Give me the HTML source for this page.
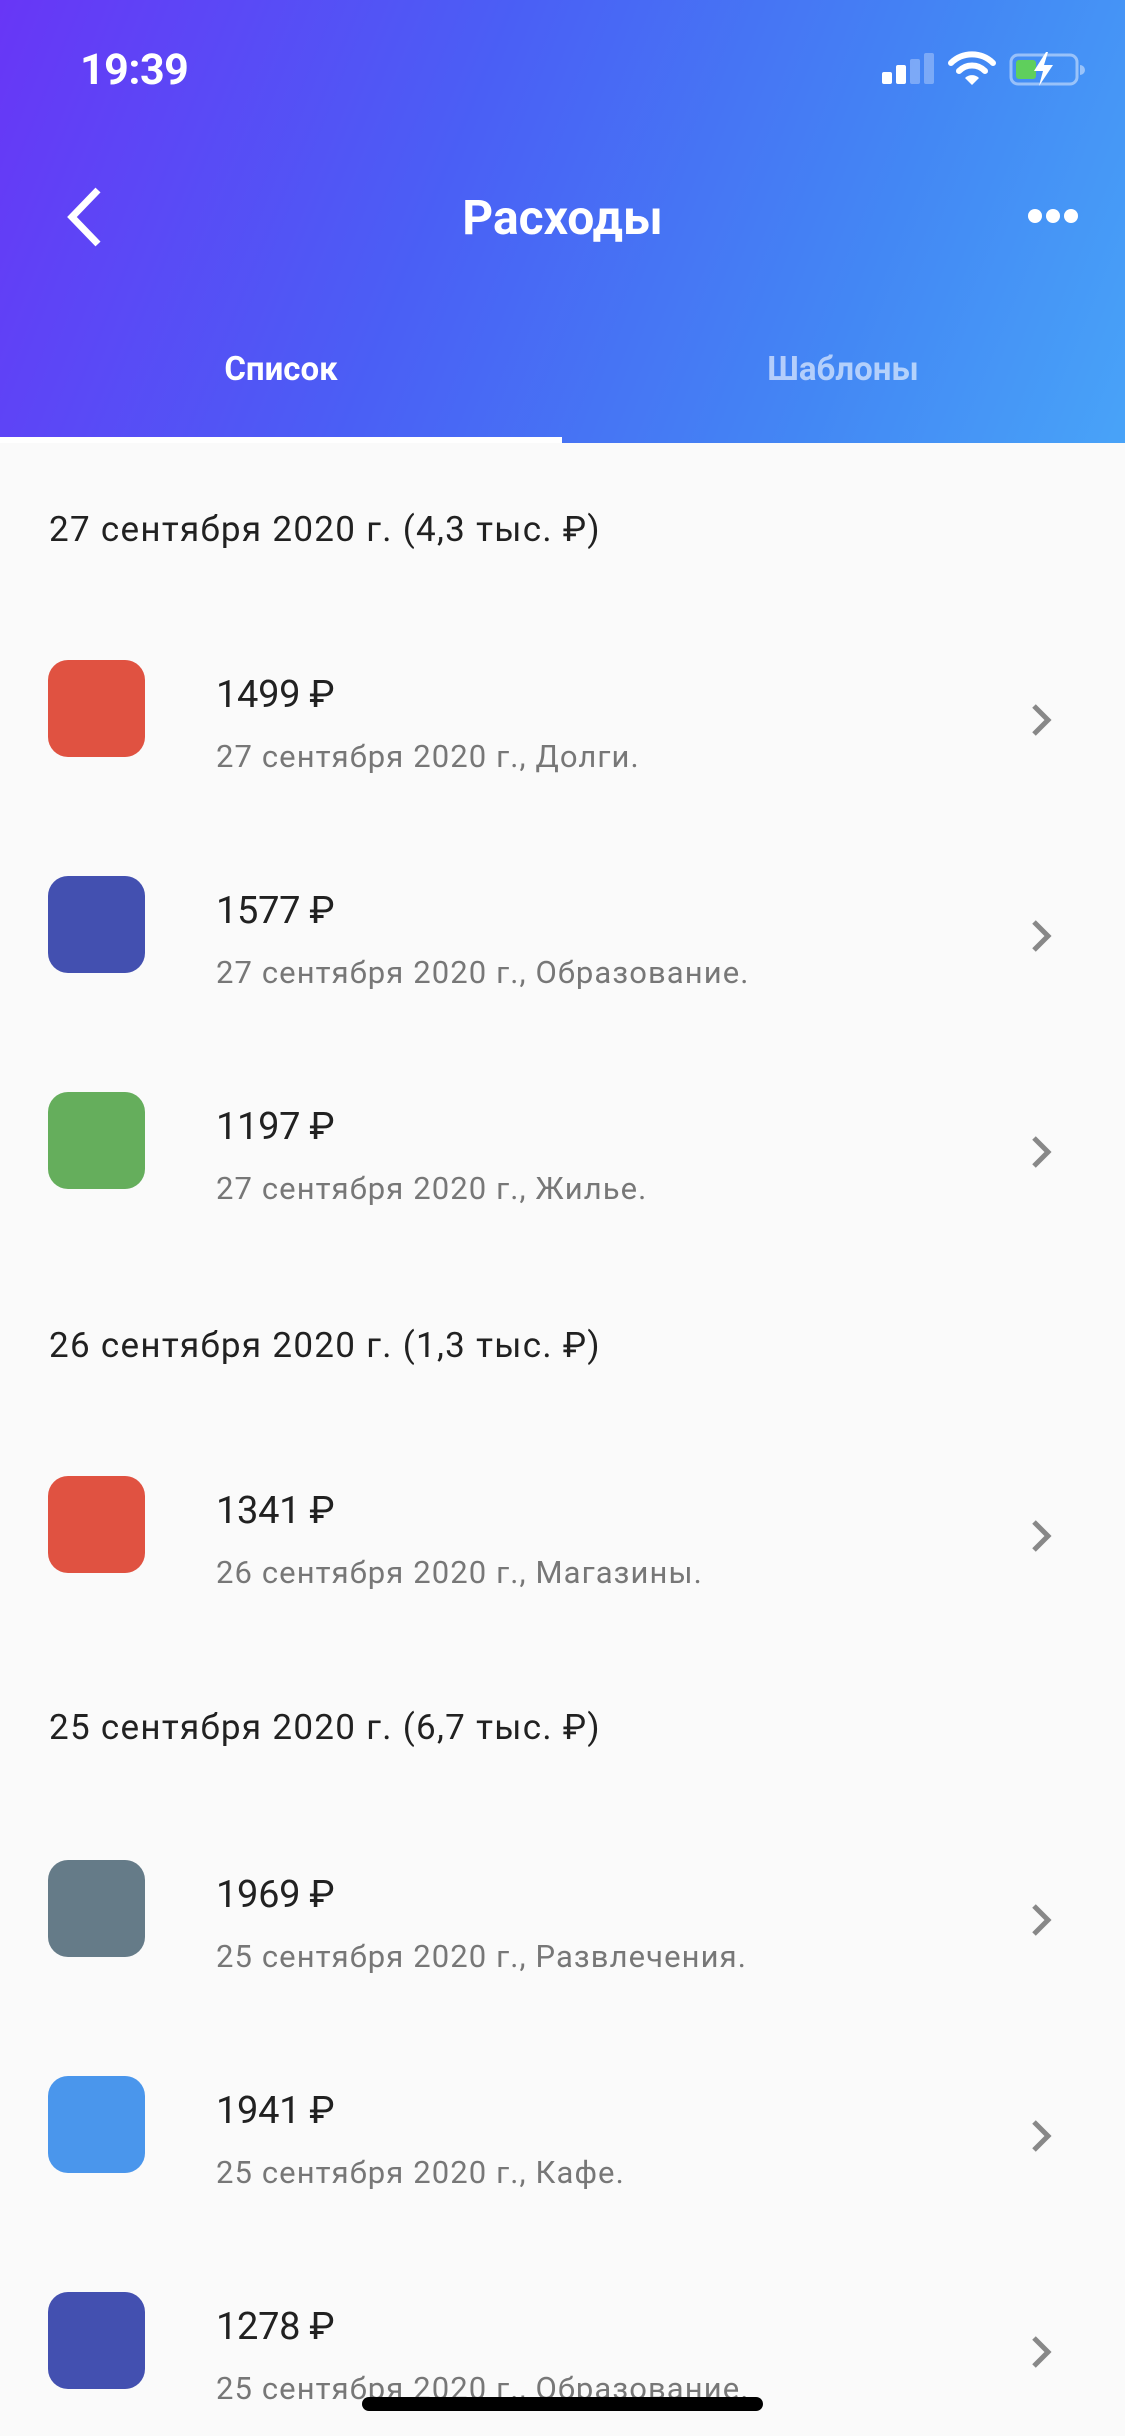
<!DOCTYPE html>
<html><head><meta charset="utf-8"><style>
*{margin:0;padding:0;box-sizing:border-box}
body{width:1125px;height:2436px;background:#fafafa;position:relative;overflow:hidden;font-family:"Roboto","Liberation Sans",sans-serif}
.hdr{position:absolute;left:0;top:0;width:1125px;height:443px;background:linear-gradient(112deg,#6836f6 0%,#4a5ff5 40%,#4387f4 75%,#48a3f8 100%)}
.t{position:absolute;white-space:nowrap}
.sq{position:absolute;left:48px;width:97px;height:97px;border-radius:20px}
.amt{left:216px;font-size:38px;color:#212121;line-height:44px;letter-spacing:-0.3px}
.sub{left:216px;font-size:31px;color:#777;line-height:38px;letter-spacing:1.1px}
.sec{left:49px;font-size:35px;color:#212121;line-height:44px;letter-spacing:1.3px}
.chev{position:absolute;left:1028px;width:28px;height:36px}
</style></head><body>
<div class="hdr"></div>
<div class="t" style="left:80px;top:44px;font-size:43px;font-weight:bold;color:#fff;line-height:52px;letter-spacing:-0.5px">19:39</div>
<svg style="position:absolute;left:880px;top:50px" width="205" height="38" viewBox="0 0 205 38">
<rect x="2" y="22" width="10" height="12" rx="2" fill="#fff"/>
<rect x="16" y="15" width="10" height="19" rx="2" fill="#fff"/>
<rect x="30" y="9" width="10" height="25" rx="2" fill="rgba(255,255,255,0.3)"/>
<rect x="44" y="3" width="10" height="31" rx="2" fill="rgba(255,255,255,0.3)"/>
<path d="M71 13a30 30 0 0 1 42 0" stroke="#fff" stroke-width="6" fill="none" stroke-linecap="round"/>
<path d="M79 21a18 18 0 0 1 26 0" stroke="#fff" stroke-width="6" fill="none" stroke-linecap="round"/>
<path d="M92 35l-7-7a10 10 0 0 1 14 0z" fill="#fff"/>
<rect x="131" y="5" width="66" height="29" rx="7" fill="none" stroke="rgba(255,255,255,0.45)" stroke-width="3"/>
<path d="M200 15v10a3 3 0 0 0 0-10z" fill="rgba(255,255,255,0.45)"/>
<rect x="136" y="10" width="20" height="19" rx="3" fill="#5fcf5c"/>
<path d="M166 2l-12 19h9l-4 15 14-21h-9l4-13z" fill="#fff"/>
</svg>
<svg style="position:absolute;left:62px;top:186px" width="44" height="62" viewBox="0 0 44 62"><path d="M36 4L10 31l26 27" stroke="#fff" stroke-width="7" fill="none"/></svg>
<div class="t" style="left:0;width:1125px;text-align:center;top:190px;font-size:48px;font-weight:bold;color:#fff;line-height:56px">Расходы</div>
<svg style="position:absolute;left:1026px;top:205px" width="54" height="22"><circle cx="9" cy="11" r="7" fill="#fff"/><circle cx="27" cy="11" r="7" fill="#fff"/><circle cx="45" cy="11" r="7" fill="#fff"/></svg>
<div class="t" style="left:0;width:562px;text-align:center;top:350px;font-size:33px;font-weight:bold;color:#fff;line-height:40px">Список</div>
<div class="t" style="left:562px;width:562px;text-align:center;top:350px;font-size:33px;font-weight:bold;color:rgba(255,255,255,0.6);line-height:40px">Шаблоны</div>
<div style="position:absolute;left:0;top:437px;width:562px;height:6px;background:#fff"></div>

<div class="t sec" style="top:508px">27 сентября 2020 г. (4,3 тыс. ₽)</div>

<div class="sq" style="top:660px;background:#e05241"></div>
<div class="t amt" style="top:673px">1499 ₽</div>
<div class="t sub" style="top:738px">27 сентября 2020 г., Долги.</div>
<svg class="chev" style="top:702px" viewBox="0 0 28 36"><path d="M6 4l14 14L6 32" stroke="#888" stroke-width="5" fill="none"/></svg>

<div class="sq" style="top:876px;background:#4350b0"></div>
<div class="t amt" style="top:889px">1577 ₽</div>
<div class="t sub" style="top:954px">27 сентября 2020 г., Образование.</div>
<svg class="chev" style="top:918px" viewBox="0 0 28 36"><path d="M6 4l14 14L6 32" stroke="#888" stroke-width="5" fill="none"/></svg>

<div class="sq" style="top:1092px;background:#65ae5c"></div>
<div class="t amt" style="top:1105px">1197 ₽</div>
<div class="t sub" style="top:1170px">27 сентября 2020 г., Жилье.</div>
<svg class="chev" style="top:1134px" viewBox="0 0 28 36"><path d="M6 4l14 14L6 32" stroke="#888" stroke-width="5" fill="none"/></svg>

<div class="t sec" style="top:1324px">26 сентября 2020 г. (1,3 тыс. ₽)</div>

<div class="sq" style="top:1476px;background:#e05241"></div>
<div class="t amt" style="top:1489px">1341 ₽</div>
<div class="t sub" style="top:1554px">26 сентября 2020 г., Магазины.</div>
<svg class="chev" style="top:1518px" viewBox="0 0 28 36"><path d="M6 4l14 14L6 32" stroke="#888" stroke-width="5" fill="none"/></svg>

<div class="t sec" style="top:1706px">25 сентября 2020 г. (6,7 тыс. ₽)</div>

<div class="sq" style="top:1860px;background:#657b88"></div>
<div class="t amt" style="top:1873px">1969 ₽</div>
<div class="t sub" style="top:1938px">25 сентября 2020 г., Развлечения.</div>
<svg class="chev" style="top:1902px" viewBox="0 0 28 36"><path d="M6 4l14 14L6 32" stroke="#888" stroke-width="5" fill="none"/></svg>

<div class="sq" style="top:2076px;background:#4a96ec"></div>
<div class="t amt" style="top:2089px">1941 ₽</div>
<div class="t sub" style="top:2154px">25 сентября 2020 г., Кафе.</div>
<svg class="chev" style="top:2118px" viewBox="0 0 28 36"><path d="M6 4l14 14L6 32" stroke="#888" stroke-width="5" fill="none"/></svg>

<div class="sq" style="top:2292px;background:#4350b0"></div>
<div class="t amt" style="top:2305px">1278 ₽</div>
<div class="t sub" style="top:2370px">25 сентября 2020 г., Образование.</div>
<svg class="chev" style="top:2334px" viewBox="0 0 28 36"><path d="M6 4l14 14L6 32" stroke="#888" stroke-width="5" fill="none"/></svg>

<div style="position:absolute;left:362px;top:2397px;width:401px;height:14px;border-radius:7px;background:#000"></div>
</body></html>
